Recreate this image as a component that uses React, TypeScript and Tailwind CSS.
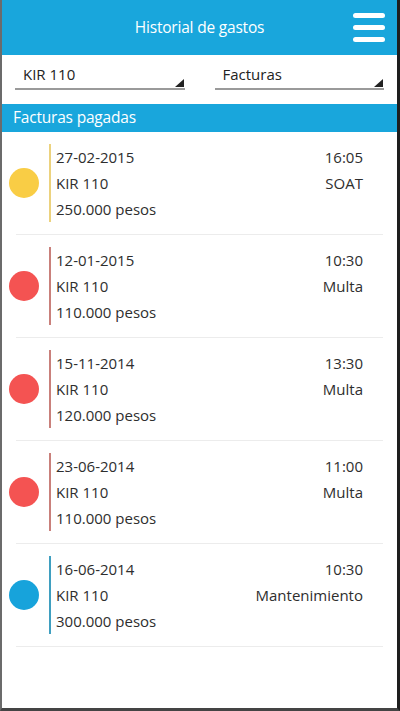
import React from "react";

type Item = {
  date: string;
  time: string;
  type: string;
  amount: string;
  dot: string;
  line: string;
};

const items: Item[] = [
  { date: "27-02-2015", time: "16:05", type: "SOAT", amount: "250.000 pesos", dot: "bg-[#f9cd45]", line: "bg-[#ecd27e]" },
  { date: "12-01-2015", time: "10:30", type: "Multa", amount: "110.000 pesos", dot: "bg-[#f45352]", line: "bg-[#c9807b]" },
  { date: "15-11-2014", time: "13:30", type: "Multa", amount: "120.000 pesos", dot: "bg-[#f45352]", line: "bg-[#c9807b]" },
  { date: "23-06-2014", time: "11:00", type: "Multa", amount: "110.000 pesos", dot: "bg-[#f45352]", line: "bg-[#c9807b]" },
  { date: "16-06-2014", time: "10:30", type: "Mantenimiento", amount: "300.000 pesos", dot: "bg-[#17a3db]", line: "bg-[#3f9fc0]" },
];

function Select({ label }: { label: string }) {
  return (
    <div className="flex-1 flex flex-col">
      <div className="flex items-end justify-between h-[30px] pl-[8px] pr-[1px]">
        <span className="text-[15px] leading-[20px] text-[#222] mb-[4px]">{label}</span>
        <svg width="9" height="8" viewBox="0 0 9 8" className="mb-[1px]">
          <polygon points="9,0 9,8 0,8" fill="#222" />
        </svg>
      </div>
      <div className="h-[2px] bg-[#9a9a9a]" />
    </div>
  );
}

export default function App() {
  return (
    <div
      className="w-[400px] h-[711px] bg-white flex flex-col border-l-[2px] border-l-[#6b6b6b] border-r-[3px] border-r-[#1e1e1e] border-b-[3px] border-b-[#444]"
      style={{ fontFamily: "'Open Sans', 'Noto Sans', sans-serif" }}
    >
      <header className="h-[55px] bg-[#19a6dc] grid grid-cols-[1fr_auto_1fr] items-center">
        <div />
        <h1 className="text-white text-[15.5px] font-normal tracking-[-0.2px]">Historial de gastos</h1>
        <div className="flex justify-end pr-[12px]">
          <div className="flex flex-col gap-[7px] w-[32px]">
            <div className="h-[5px] rounded-full bg-white" />
            <div className="h-[5px] rounded-full bg-white" />
            <div className="h-[5px] rounded-full bg-white" />
          </div>
        </div>
      </header>

      <div className="h-[49px] flex gap-[30px] px-[13px] pt-[3px]">
        <Select label="KIR 110" />
        <Select label="Facturas" />
      </div>

      <div className="h-[28px] bg-[#19a6dc] flex items-center pl-[11px]">
        <span className="text-white text-[15.5px] tracking-[-0.2px]">Facturas pagadas</span>
      </div>

      <div className="flex flex-col">
        {items.map((it, i) => (
          <div key={i} className="flex flex-col">
            <div className="flex items-center py-[12px] pl-[7px] pr-[34px]">
              <div className={`w-[30px] h-[30px] rounded-full ${it.dot}`} />
              <div className={`ml-[10px] w-[2px] self-stretch ${it.line}`} />
              <div className="flex-1 flex justify-between pl-[5px] text-[15px] leading-[26px] text-[#2e2e2e]">
                <div className="flex flex-col">
                  <span>{it.date}</span>
                  <span>KIR 110</span>
                  <span>{it.amount}</span>
                </div>
                <div className="flex flex-col items-end">
                  <span>{it.time}</span>
                  <span>{it.type}</span>
                </div>
              </div>
            </div>
            <div className="h-[1px] bg-[#ececec] mx-[14px]" />
          </div>
        ))}
      </div>
    </div>
  );
}
